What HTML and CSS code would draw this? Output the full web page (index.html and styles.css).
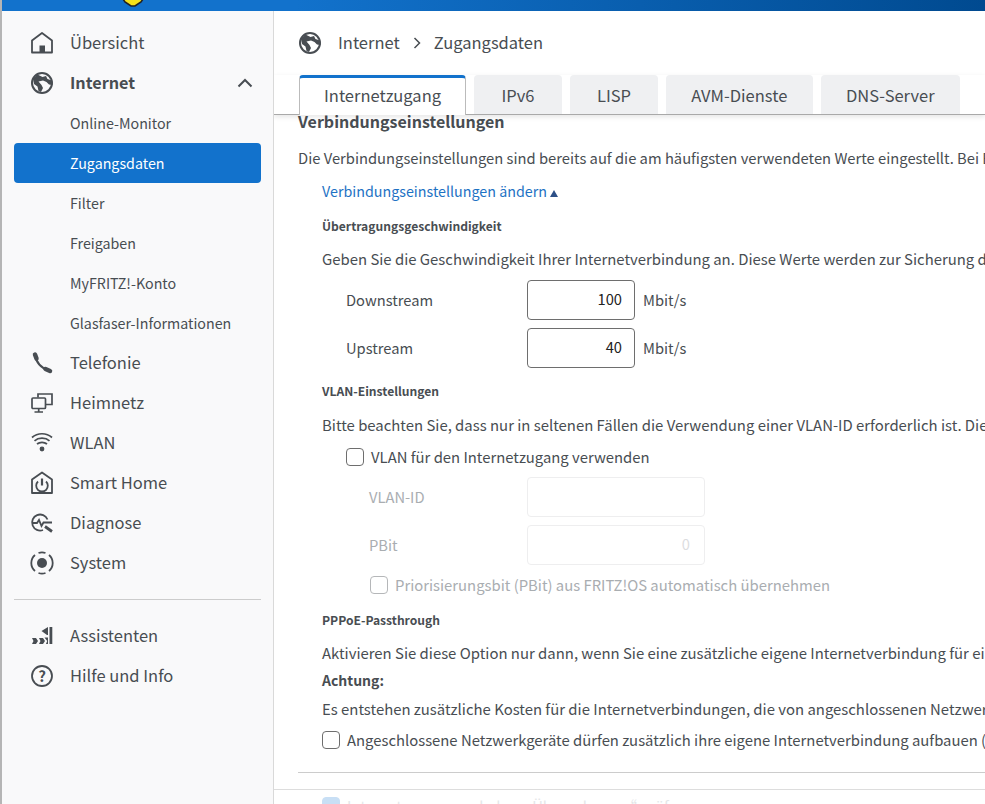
FILE: index.html
```html
<!DOCTYPE html>
<html lang="de">
<head>
    <meta charset="UTF-8">
    <meta name="viewport" content="width=device-width, initial-scale=1.0">
    <title>FRITZ!Box</title>
    <link rel="stylesheet" href="styles.css">
</head>
<body>
    <header class="topbar">
        <svg class="logo" viewBox="0 0 22 7" width="22" height="7"><path d="M1 -1h20l-2 3-6 4h-4l-6-4z" fill="#f5e21a" stroke="#222" stroke-width="1.6"/></svg>
    </header>
    <div class="page">
        <nav class="sidebar">
            <a class="nav-item">
                <svg class="nav-icon" viewBox="0 0 24 24"><path d="M2 21.500V9.500L12 2l10 7.500v12z" fill="none" stroke="#484d52" stroke-width="1.800" stroke-linejoin="round"/><rect x="9.500" y="14.500" width="5.500" height="7" fill="#484d52"/></svg>
                <span>Übersicht</span>
            </a>
            <a class="nav-item nav-open">
                <svg class="nav-icon" viewBox="0 0 24 24"><circle cx="12" cy="12" r="10" fill="none" stroke="#484d52" stroke-width="2"/><path d="M7.500 3.500l5 2.500 3.500-1 1.500 3 4.500 1.500.5 4.500-3.500-.5-2.500-2.500-3.500-1.500-4.500 1 3 3.500 1.500 3-2 4-2.500-1-1-4.500-3.500-2.500L3 8z" fill="#484d52"/></svg>
                <span>Internet</span>
                <svg class="nav-chevron" viewBox="0 0 16 10"><path d="M1.500 8.500L8 2l6.500 6.500" fill="none" stroke="#484d52" stroke-width="2"/></svg>
            </a>
            <a class="sub-item">Online-Monitor</a>
            <a class="sub-item sub-active">Zugangsdaten</a>
            <a class="sub-item">Filter</a>
            <a class="sub-item">Freigaben</a>
            <a class="sub-item">MyFRITZ!-Konto</a>
            <a class="sub-item">Glasfaser-Informationen</a>
            <a class="nav-item">
                <svg class="nav-icon" viewBox="0 0 24 24" fill="none" stroke="#484d52" stroke-linecap="round"><path d="M5.500 4c.5 7 5.500 13 14 16" stroke-width="2.200"/><path d="M5 3.500l1.500 4" stroke-width="4.500"/><path d="M15.500 18l4.500 2" stroke-width="4.500"/></svg>
                <span>Telefonie</span>
            </a>
            <a class="nav-item">
                <svg class="nav-icon" viewBox="0 0 24 24" fill="none" stroke="#484d52" stroke-width="1.700"><path d="M8 6.500V3h14v10.500h-6.500"/><rect x="2" y="7" width="13.500" height="10.500" rx="1"/><path d="M8.700 17.500v3.500M4.500 21h8.500"/></svg>
                <span>Heimnetz</span>
            </a>
            <a class="nav-item">
                <svg class="nav-icon" viewBox="0 0 24 24" fill="none" stroke="#484d52" stroke-width="1.700"><path d="M2 6.500c5.500-5 14.500-5 20 0M4.500 9.800c4-3.500 11-3.500 15 0M7 13c2.800-2.300 7.200-2.300 10 0"/><circle cx="12" cy="18" r="2.400" fill="#484d52" stroke="none"/></svg>
                <span>WLAN</span>
            </a>
            <a class="nav-item">
                <svg class="nav-icon" viewBox="0 0 24 24" fill="none" stroke="#484d52" stroke-width="1.800"><path d="M2 22V8.500L12 1.500l10 7V22z" stroke-linejoin="round"/><path d="M8 10.500a5.800 5.800 0 1 0 8 0"/><path d="M12 7.500v7" stroke-width="2.200"/></svg>
                <span>Smart Home</span>
            </a>
            <a class="nav-item">
                <svg class="nav-icon" viewBox="0 0 24 24" fill="none" stroke="#484d52" stroke-width="1.800"><path d="M17.500 8.500A8 8 0 1 0 13 19"/><path d="M2.500 12H7l2-3 2.500 6 2-3.500H22"/><path d="M15 15.500l7 5" stroke-width="2.800"/></svg>
                <span>Diagnose</span>
            </a>
            <a class="nav-item">
                <svg class="nav-icon" viewBox="0 0 24 24" fill="none" stroke="#484d52" stroke-width="1.800"><path d="M5 4a10.500 10.500 0 0 0 0 16M19 4a10.500 10.500 0 0 1 0 16M8.500 2a10.500 10.500 0 0 1 7 0M8.500 22a10.500 10.500 0 0 0 7 0"/><circle cx="12" cy="12" r="5" fill="#484d52" stroke="none"/></svg>
                <span>System</span>
            </a>
            <hr class="nav-rule">
            <a class="nav-item">
                <svg class="nav-icon" viewBox="0 0 24 24" fill="#484d52"><path d="M2 14h4l2 3-2 3H2l1.500-3zM9 14h4l2 3-2 3H9l1.500-3zM18 3v8h-1l-5.500-4zM19.500 3h2.800v17h-2.800zM14.500 13.500H18V20h-2l1.200-3z"/></svg>
                <span>Assistenten</span>
            </a>
            <a class="nav-item">
                <svg class="nav-icon" viewBox="0 0 24 24"><circle cx="12" cy="12" r="10" fill="none" stroke="#484d52" stroke-width="1.800"/><text class="help-mark" x="12" y="17.500" text-anchor="middle">?</text></svg>
                <span>Hilfe und Info</span>
            </a>
        </nav>
        <main class="main">
            <div class="crumbs">
                <svg class="crumb-icon" viewBox="0 0 24 24"><circle cx="12" cy="12" r="10" fill="none" stroke="#484d52" stroke-width="2"/><path d="M7.500 3.500l5 2.500 3.500-1 1.500 3 4.500 1.500.5 4.500-3.500-.5-2.500-2.500-3.500-1.500-4.500 1 3 3.500 1.500 3-2 4-2.500-1-1-4.500-3.500-2.500L3 8z" fill="#484d52"/></svg>
                <span>Internet</span>
                <svg class="crumb-sep" viewBox="0 0 8 12"><path d="M1.500 1l5 5-5 5" fill="none" stroke="#484d52" stroke-width="1.500"/></svg>
                <span>Zugangsdaten</span>
            </div>
            <div class="tabs">
                <a class="tab tab-active">Internetzugang</a>
                <a class="tab">IPv6</a>
                <a class="tab">LISP</a>
                <a class="tab">AVM-Dienste</a>
                <a class="tab">DNS-Server</a>
            </div>
            <div class="content">
                <h2 class="section-title">Verbindungseinstellungen</h2>
                <p class="line line-first">Die Verbindungseinstellungen sind bereits auf die am häufigsten verwendeten Werte eingestellt. Bei Bedarf können Sie diese Einstellungen ändern.</p>
                <div class="inset">
                    <a class="toggle">Verbindungseinstellungen ändern<span class="toggle-arrow"></span></a>
                    <h4 class="sub-title sub-speed">Übertragungsgeschwindigkeit</h4>
                    <p class="line">Geben Sie die Geschwindigkeit Ihrer Internetverbindung an. Diese Werte werden zur Sicherung der Priorität verwendet.</p>
                    <div class="field field-first">
                        <label>Downstream</label>
                        <div class="box">100</div>
                        <span>Mbit/s</span>
                    </div>
                    <div class="field">
                        <label>Upstream</label>
                        <div class="box">40</div>
                        <span>Mbit/s</span>
                    </div>
                    <h4 class="sub-title sub-vlan">VLAN-Einstellungen</h4>
                    <p class="line">Bitte beachten Sie, dass nur in seltenen Fällen die Verwendung einer VLAN-ID erforderlich ist. Die benötigten Werte erhalten Sie von Ihrem Anbieter.</p>
                    <div class="check check-vlan"><span class="tick"></span>VLAN für den Internetzugang verwenden</div>
                    <div class="field field-off field-id">
                        <label>VLAN-ID</label>
                        <div class="box"></div>
                    </div>
                    <div class="field field-off">
                        <label>PBit</label>
                        <div class="box">0</div>
                    </div>
                    <div class="check check-off"><span class="tick"></span>Priorisierungsbit (PBit) aus FRITZ!OS automatisch übernehmen</div>
                    <h4 class="sub-title sub-pppoe">PPPoE-Passthrough</h4>
                    <p class="line">Aktivieren Sie diese Option nur dann, wenn Sie eine zusätzliche eigene Internetverbindung für ein angeschlossenes Gerät benötigen.</p>
                    <p class="line line-strong">Achtung:</p>
                    <p class="line line-warn">Es entstehen zusätzliche Kosten für die Internetverbindungen, die von angeschlossenen Netzwerkgeräten aufgebaut werden.</p>
                    <div class="check check-pppoe"><span class="tick"></span>Angeschlossene Netzwerkgeräte dürfen zusätzlich ihre eigene Internetverbindung aufbauen (PPPoE-Passthrough)</div>
                </div>
                <hr class="content-rule">
            </div>
            <div class="footer-peek">
                <span class="tick tick-on"></span>Internetzugang nach dem „Übernehmen“ prüfen
            </div>
        </main>
    </div>
</body>
</html>
```

FILE: styles.css
```css
* {
    box-sizing: border-box;
}
body {
    margin: 0;
    height: 804px;
    overflow: hidden;
    background-color: #fff;
    color: #484d52;
    font-family: "Noto Sans CJK SC", "Noto Sans", sans-serif;
    font-size: 14.7px;
    border-left: 2px solid #b5b5b5;
}
.topbar {
    height: 11px;
    margin-left: -2px;
    background: linear-gradient(90deg, #1272cc 0%, #1272cc 30%, #004a90 100%);
    position: relative;
}
.logo {
    position: absolute;
    left: 122px;
    top: 0;
}
.page {
    display: flex;
    height: 793px;
}
.sidebar {
    width: 272px;
    flex: none;
    background-color: #f9f9fa;
    border-right: 1px solid #d9d9d9;
    padding: 12px 12px 0;
}
.nav-item {
    display: flex;
    align-items: center;
    height: 40px;
    padding-left: 16px;
    font-size: 16.5px;
}
.nav-item span {
    margin: 0 0 2px 16px;
}
.nav-icon {
    width: 24px;
    height: 24px;
    flex: none;
}
.nav-open {
    font-weight: 700;
    font-size: 16.2px;
}
.nav-chevron {
    width: 16px;
    height: 10px;
    margin-left: auto;
    margin-right: 8px;
}
.sub-item {
    display: flex;
    align-items: center;
    height: 40px;
    padding: 0 0 2px 56px;
    font-size: 14.25px;
}
.sub-active {
    background-color: #1272cc;
    color: #fff;
    border-radius: 4px;
}
.nav-rule {
    border: none;
    border-top: 1px solid #ccc;
    margin: 16px 0 16px;
}
.help-mark {
    font-size: 15px;
    font-weight: 700;
    fill: #484d52;
}
.main {
    flex: 1;
    min-width: 0;
    overflow: hidden;
}
.crumbs {
    display: flex;
    align-items: center;
    height: 40px;
    margin: 12px 0 0 24px;
    font-size: 16.5px;
}
.crumbs span {
    margin-bottom: 2px;
}
.crumb-icon {
    width: 24px;
    height: 24px;
    margin-right: 16px;
}
.crumb-sep {
    width: 8px;
    height: 12px;
    margin: 0 13px;
}
.tabs {
    display: flex;
    gap: 8px;
    height: 40px;
    margin-top: 12px;
    padding-left: 25px;
    border-bottom: 1px solid #a9a9a9;
    box-shadow: 0 2px 5px rgba(0, 0, 0, 0.1);
    position: relative;
}
.tab {
    display: flex;
    align-items: center;
    justify-content: center;
    height: 39px;
    min-width: 88px;
    padding: 0 25.3px;
    background-color: #eff0f2;
    border-radius: 4px 4px 0 0;
    font-size: 16.5px;
    white-space: nowrap;
}
.tab-active {
    height: 40px;
    background-color: #fff;
    border: 1px solid #bbb;
    border-top: 3px solid #1272cc;
    border-bottom: none;
    padding: 0 24px 3px;
}
.content {
    padding-left: 24px;
    width: 1200px;
}
.section-title {
    margin: -2px 0 0;
    font-size: 16px;
    font-weight: 700;
    line-height: 16px;
}
.line {
    margin: 0;
    font-size: 14.9px;
    line-height: 20px;
    white-space: nowrap;
}
.line-first {
    margin-top: 19px;
    font-size: 14.75px;
}
.inset {
    padding-left: 24px;
}
.toggle {
    display: block;
    margin-top: 13px;
    color: #1e72c4;
    font-size: 14.3px;
    line-height: 20px;
}
.toggle-arrow {
    display: inline-block;
    margin-left: 3px;
    border: 4.5px solid transparent;
    border-top: none;
    border-bottom: 7px solid #2c4f86;
}
.sub-title {
    margin: 0;
    font-size: 12.1px;
    font-weight: 700;
    line-height: 16px;
}
.sub-speed {
    margin-top: 17px;
}
.sub-title + .line {
    margin-top: 15px;
}
.sub-vlan + .line {
    margin-top: 16px;
}
.field {
    display: flex;
    align-items: center;
    margin-top: 8px;
    padding-left: 24px;
}
.field-first {
    margin-top: 11px;
}
.field label {
    width: 181px;
    padding-bottom: 2px;
}
.field span {
    margin-left: 8px;
    padding-bottom: 2px;
}
.box {
    width: 108px;
    height: 40px;
    line-height: 36px;
    padding-right: 12px;
    text-align: right;
    background-color: #fff;
    border: 1px solid #6e6e6e;
    border-radius: 4px;
    color: #222;
}
.sub-vlan {
    margin-top: 15px;
}
.check {
    display: flex;
    align-items: center;
    line-height: 20px;
    font-size: 14.85px;
    white-space: nowrap;
}
.tick {
    width: 18px;
    height: 18px;
    flex: none;
    margin-right: 7px;
    background-color: #fff;
    border: 1px solid #6e6e6e;
    border-radius: 4px;
}
.check-vlan {
    margin-top: 12px;
    padding-left: 24px;
}
.field-off {
    color: #a9adb1;
    padding-left: 47px;
}
.field-id {
    margin-top: 10px;
}
.field-off label {
    width: 158px;
}
.field-off .box {
    width: 178px;
    padding-right: 14px;
    border-color: #eeeeef;
    color: #dcdddf;
}
.check-off {
    margin-top: 10px;
    padding-left: 48px;
    color: #a9adb1;
}
.check-off .tick {
    border-color: #b5b7b9;
}
.sub-pppoe {
    margin-top: 17px;
}
.line-strong {
    margin-top: 7px;
    font-size: 14px;
    font-weight: 700;
}
.line-warn {
    margin-top: 9px;
}
.check-pppoe {
    margin-top: 11px;
}
.content-rule {
    border: none;
    border-top: 1px solid #ccc;
    margin: 22px 0 0;
}
.footer-peek {
    display: flex;
    align-items: flex-start;
    margin-top: 16px;
    padding: 7px 0 0 48px;
    border-top: 1px solid #ddd;
    color: #e4e6e8;
    line-height: 18px;
}
.tick-on {
    background-color: #c8dff5;
    border-color: #c8dff5;
}
```
